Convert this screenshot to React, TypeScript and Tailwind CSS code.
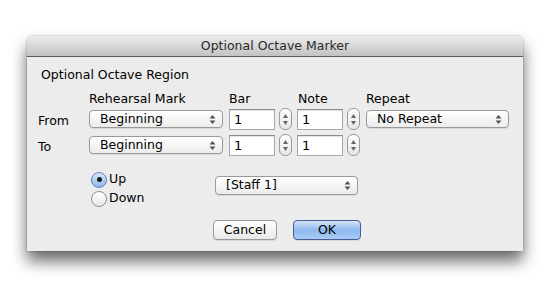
const font = { fontFamily: '"DejaVu Sans", "Noto Sans", sans-serif' };

const PopupArrows = () => (
  <svg width="7" height="11" viewBox="0 0 7 11" className="shrink-0">
    <path d="M3.5 1 L6.5 4.5 L0.5 4.5 Z" fill="#555" />
    <path d="M3.5 10 L6.5 6.5 L0.5 6.5 Z" fill="#555" />
  </svg>
);

const Popup: React.FC<{ label: string; width: string; className?: string }> = ({ label, width, className }) => (
  <div
    className={`flex items-center justify-between h-[18px] ${width} rounded-[4px] border border-[#9a9a9a] bg-gradient-to-b from-white to-[#ececec] pl-[10px] pr-[6px] shadow-[0_1px_0_rgba(0,0,0,0.08)] ${className ?? ""}`}
  >
    <span className="text-[12.5px] leading-none text-black">{label}</span>
    <PopupArrows />
  </div>
);

const Field: React.FC<{ value: string }> = ({ value }) => (
  <div className="flex items-center h-[21px] w-[46px] border border-[#a8a8a8] border-t-[#8c8c8c] bg-white pl-[4px] shadow-[inset_0_1px_1px_rgba(0,0,0,0.12)]">
    <span className="text-[13px] leading-none text-black">{value}</span>
  </div>
);

const Stepper = () => (
  <div className="flex flex-col items-center justify-center gap-[3px] h-[22px] w-[13px] rounded-[6px] border border-[#9a9a9a] bg-gradient-to-b from-white to-[#e6e6e6]">
    <svg width="5" height="4" viewBox="0 0 5 4">
      <path d="M2.5 0 L5 4 L0 4 Z" fill="#666" />
    </svg>
    <svg width="5" height="4" viewBox="0 0 5 4">
      <path d="M2.5 4 L5 0 L0 0 Z" fill="#666" />
    </svg>
  </div>
);

const Radio: React.FC<{ checked?: boolean; label: string }> = ({ checked, label }) => (
  <div className="flex items-center h-[19px]">
    <div
      className={`flex items-center justify-center w-[16px] h-[16px] rounded-full border ${
        checked
          ? "border-[#5c7fb8] bg-gradient-to-b from-[#d6e6fb] to-[#8fb8ec]"
          : "border-[#8e8e8e] bg-gradient-to-b from-white to-[#e8e8e8]"
      }`}
    >
      {checked && <div className="w-[5px] h-[5px] rounded-full bg-[#1a1a1a]" />}
    </div>
    <span className="ml-[2px] text-[12.5px] leading-none text-black">{label}</span>
  </div>
);

export default function App() {
  return (
    <div className="w-[551px] h-[288px] bg-white pt-[36px] pl-[27px] overflow-hidden" style={font}>
      <div className="w-[496px] rounded-t-[5px] shadow-[0_10px_16px_rgba(0,0,0,0.6),0_0_2px_rgba(0,0,0,0.35)]">
        <div className="flex items-center justify-center h-[21px] rounded-t-[5px] bg-gradient-to-b from-[#ececec] to-[#c2c2c2] border-b border-[#5a5a5a]">
          <span className="text-[12.5px] leading-none text-[#2a2a2a]">Optional Octave Marker</span>
        </div>

        <div className="h-[194px] bg-[#ececec] pt-[11px]">
          <div className="pl-[14px] text-[12.5px] leading-[14px] text-black">Optional Octave Region</div>

          {/* column headings */}
          <div className="flex mt-[10px] h-[14px] text-[12.5px] leading-[14px] text-black">
            <span className="ml-[62px] w-[140px]">Rehearsal Mark</span>
            <span className="w-[69px]">Bar</span>
            <span className="w-[68px]">Note</span>
            <span>Repeat</span>
          </div>

          {/* From row */}
          <div className="flex items-center mt-[2px] h-[22px]">
            <span className="ml-[11px] w-[51px] text-[12.5px] leading-none pt-[4px] text-black">From</span>
            <Popup label="Beginning" width="w-[134px]" />
            <div className="ml-[6px]"><Field value="1" /></div>
            <div className="ml-[4px]"><Stepper /></div>
            <div className="ml-[5px]"><Field value="1" /></div>
            <div className="ml-[4px]"><Stepper /></div>
            <Popup label="No Repeat" width="w-[143px]" className="ml-[6px]" />
          </div>

          {/* To row */}
          <div className="flex items-center mt-[4px] h-[22px]">
            <span className="ml-[11px] w-[51px] text-[12.5px] leading-none pt-[4px] text-black">To</span>
            <Popup label="Beginning" width="w-[134px]" />
            <div className="ml-[6px]"><Field value="1" /></div>
            <div className="ml-[4px]"><Stepper /></div>
            <div className="ml-[5px]"><Field value="1" /></div>
            <div className="ml-[4px]"><Stepper /></div>
          </div>

          {/* direction + staff */}
          <div className="flex mt-[14px]">
            <div className="ml-[64px] w-[124px] flex flex-col">
              <Radio checked label="Up" />
              <Radio label="Down" />
            </div>
            <Popup label="[Staff 1]" width="w-[143px]" className="mt-[6px] h-[19px]" />
          </div>

          {/* buttons */}
          <div className="flex mt-[12px] ml-[186px] gap-[16px]">
            <div className="flex items-center justify-center w-[64px] h-[20px] rounded-[4px] border border-[#979797] bg-gradient-to-b from-white to-[#e9e9e9] shadow-[0_1px_0_rgba(0,0,0,0.08)]">
              <span className="text-[12.5px] leading-none text-black">Cancel</span>
            </div>
            <div className="flex items-center justify-center w-[68px] h-[20px] rounded-[4px] border border-[#4d5a9a] bg-gradient-to-b from-[#d3e3f8] via-[#8db9ee] to-[#a9cdf5] shadow-[0_1px_0_rgba(0,0,0,0.08)]">
              <span className="text-[12.5px] leading-none text-black">OK</span>
            </div>
          </div>
        </div>
      </div>
    </div>
  );
}
